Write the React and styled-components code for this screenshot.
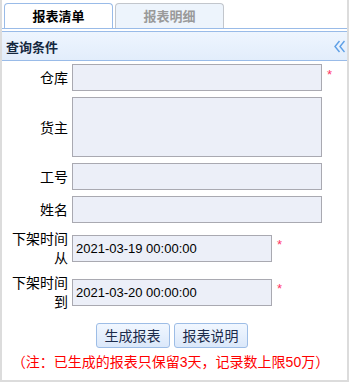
import React from "react";
import styled, { createGlobalStyle } from "styled-components";

const GlobalStyle = createGlobalStyle`
     html, body {
          margin: 0;
          padding: 0;
          background: #fff;
     }
     body {
          font-family: "Liberation Sans", "Noto Sans CJK SC", sans-serif;
     }
`;

const tabs = [
     { title: "报表清单", active: true },
     { title: "报表明细", active: false },
];

const rows = [
     { label: "仓库", required: true },
     { label: "货主", tall: true },
     { label: "工号" },
     { label: "姓名" },
     { label: "下架时间从", value: "2021-03-19 00:00:00", narrow: true, required: true },
     { label: "下架时间到", value: "2021-03-20 00:00:00", narrow: true, required: true },
];

const App = () => {
     return (
          <>
               <GlobalStyle />
               <Wrapper>
                    <TabBar>
                         {tabs.map((t) => (
                              <Tab key={t.title} $active={t.active}>
                                   {t.title}
                              </Tab>
                         ))}
                    </TabBar>
                    <PanelHeader>
                         <span>查询条件</span>
                         <svg width="11" height="13" viewBox="0 0 11 13" fill="none">
                              <path
                                   d="M5.5 1 L1 6.5 L5.5 12 M10.5 1 L6 6.5 L10.5 12"
                                   stroke="#5d9fe6"
                                   strokeWidth="1.4"
                              />
                         </svg>
                    </PanelHeader>
                    <Form>
                         {rows.map((r) => (
                              <Row key={r.label}>
                                   <Label>{r.label}</Label>
                                   {r.tall ? (
                                        <Area />
                                   ) : (
                                        <Field $narrow={r.narrow}>{r.value}</Field>
                                   )}
                                   {r.required && <Star>*</Star>}
                              </Row>
                         ))}
                    </Form>
                    <Buttons>
                         <Btn>生成报表</Btn>
                         <Btn>报表说明</Btn>
                    </Buttons>
                    <Note>（注：已生成的报表只保留3天，记录数上限50万）</Note>
               </Wrapper>
          </>
     );
};

const Wrapper = styled.div`
     width: 349px;
     height: 382px;
     box-sizing: border-box;
     border: 2px solid #dcdcdc;
     border-top: none;
     background: #fff;
`;

const TabBar = styled.div`
     display: flex;
     gap: 2px;
     padding: 3px 2px 0;
     height: 25px;
     border-bottom: 1px solid #99bbe8;
`;

const Tab = styled.div`
     width: 109px;
     box-sizing: border-box;
     height: 25px;
     border: 1px solid ${(p) => (p.$active ? "#99bbe8" : "#c2c6cc")};
     border-bottom: none;
     border-radius: 4px 4px 0 0;
     background: ${(p) => (p.$active ? "#fff" : "#edf4fc")};
     color: ${(p) => (p.$active ? "#000" : "#9a9a9a")};
     font-family: "Noto Sans CJK SC", sans-serif;
     font-size: 13px;
     font-weight: 700;
     line-height: 24px;
     text-align: center;
`;

const PanelHeader = styled.div`
     margin-top: 2px;
     height: 28px;
     display: flex;
     align-items: center;
     justify-content: space-between;
     padding: 0 2px 0 4px;
     border-top: 1px solid #99bbe8;
     border-bottom: 1px solid #99bbe8;
     background: linear-gradient(#eef5fe, #e2edfb);

     span {
          font-family: "Noto Sans CJK SC", sans-serif;
          font-size: 13px;
          font-weight: 700;
          color: #15283f;
     }
`;

const Form = styled.div`
     display: flex;
     flex-direction: column;
`;

const Row = styled.div`
     display: flex;
     align-items: center;
     padding: 3px 0;
`;

const Label = styled.div`
     width: 66px;
     flex-shrink: 0;
     text-align: right;
     font-family: "Noto Sans CJK SC", sans-serif;
     font-size: 14px;
     line-height: 19px;
     color: #000;
`;

const Field = styled.div`
     margin-left: 4px;
     width: ${(p) => (p.$narrow ? "200px" : "250px")};
     height: 27px;
     box-sizing: border-box;
     border: 1px solid #a9a9b1;
     background: #eceff8;
     padding-left: 3px;
     font-family: "Liberation Sans", sans-serif;
     font-size: 13px;
     line-height: 25px;
     color: #000;
`;

const Area = styled(Field)`
     height: 60px;
`;

const Star = styled.span`
     margin-left: 5px;
     margin-top: -6px;
     color: #ff3366;
     font-family: "Liberation Sans", sans-serif;
     font-size: 13px;
     line-height: 14px;
`;

const Buttons = styled.div`
     display: flex;
     justify-content: center;
     gap: 4px;
     margin-top: 9px;
     padding-right: 6px;
`;

const Btn = styled.button`
     width: 74px;
     height: 25px;
     padding: 0;
     border: 1px solid #9dbde6;
     border-radius: 3px;
     background: linear-gradient(#f1f7ff, #dbe8fa);
     color: #1c2b4b;
     font-family: "Noto Sans CJK SC", sans-serif;
     font-size: 14px;
     line-height: 23px;
`;

const Note = styled.div`
     margin-top: 4px;
     text-align: center;
     padding-right: 8px;
     color: #ff0000;
     font-family: "Liberation Sans", "Noto Sans CJK SC", sans-serif;
     font-size: 14px;
     line-height: 20px;
     white-space: nowrap;
`;

export default App;
